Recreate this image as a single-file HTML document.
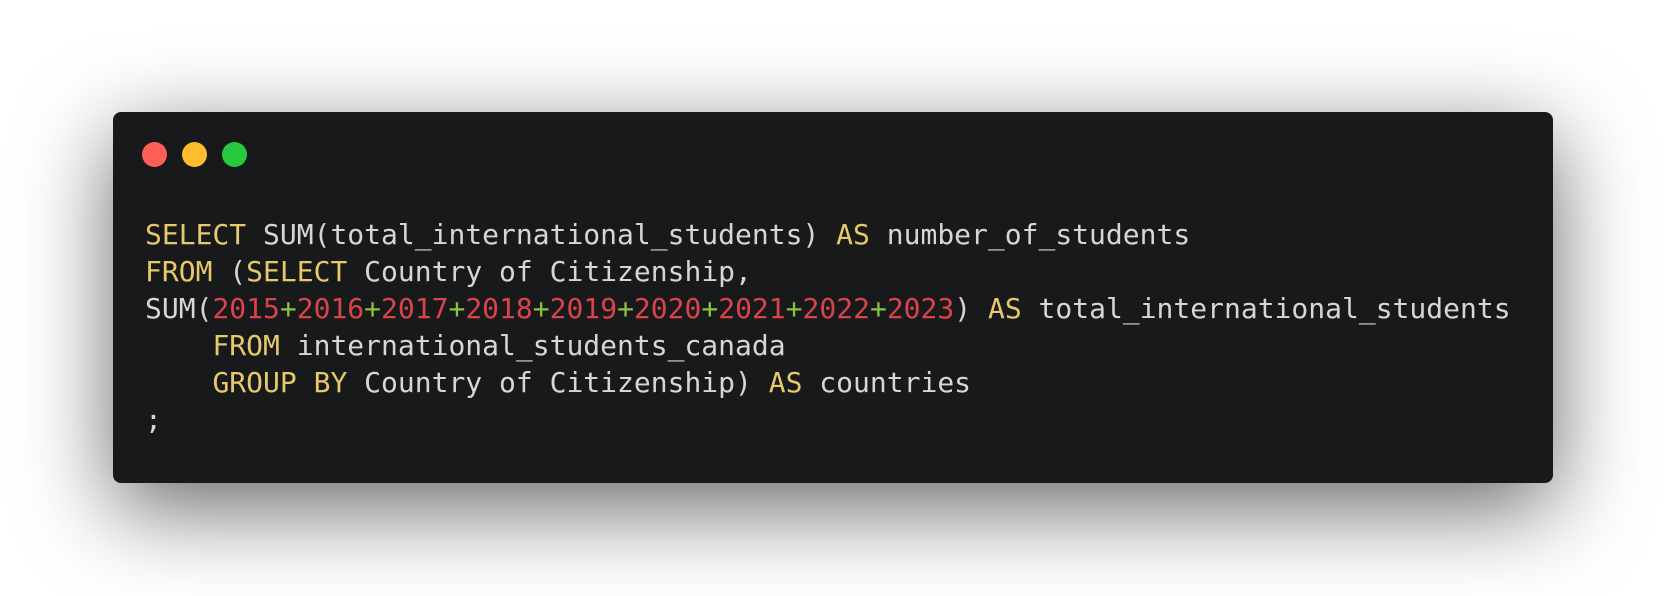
<!DOCTYPE html>
<html><head><meta charset="utf-8"><style>
html,body{margin:0;padding:0;width:1666px;height:596px;background:#fff;overflow:hidden}
.win{position:absolute;left:113px;top:112px;width:1440px;height:371px;background:#18191b;border-radius:8px;box-shadow:0 25px 90px rgba(0,0,0,0.6)}
.dot{position:absolute;top:142px;width:25px;height:25px;border-radius:50%}
pre{position:absolute;left:145px;top:216px;margin:0;font-family:"DejaVu Sans Mono","Liberation Mono",monospace;font-size:28px;line-height:37px;color:#d6d6d6}
.k{color:#e6c96a}.n{color:#d9434a}.p{color:#8cc43f}
</style></head><body>
<div class="win"></div>
<div class="dot" style="left:142px;background:#fe5f57"></div>
<div class="dot" style="left:182px;background:#febc2e"></div>
<div class="dot" style="left:222px;background:#28c840"></div>
<pre><span class="k">SELECT</span> SUM(total_international_students) <span class="k">AS</span> number_of_students
<span class="k">FROM</span> (<span class="k">SELECT</span> Country of Citizenship,
SUM(<span class="n">2015</span><span class="p">+</span><span class="n">2016</span><span class="p">+</span><span class="n">2017</span><span class="p">+</span><span class="n">2018</span><span class="p">+</span><span class="n">2019</span><span class="p">+</span><span class="n">2020</span><span class="p">+</span><span class="n">2021</span><span class="p">+</span><span class="n">2022</span><span class="p">+</span><span class="n">2023</span>) <span class="k">AS</span> total_international_students
    <span class="k">FROM</span> international_students_canada
    <span class="k">GROUP BY</span> Country of Citizenship) <span class="k">AS</span> countries
;</pre>
</body></html>
